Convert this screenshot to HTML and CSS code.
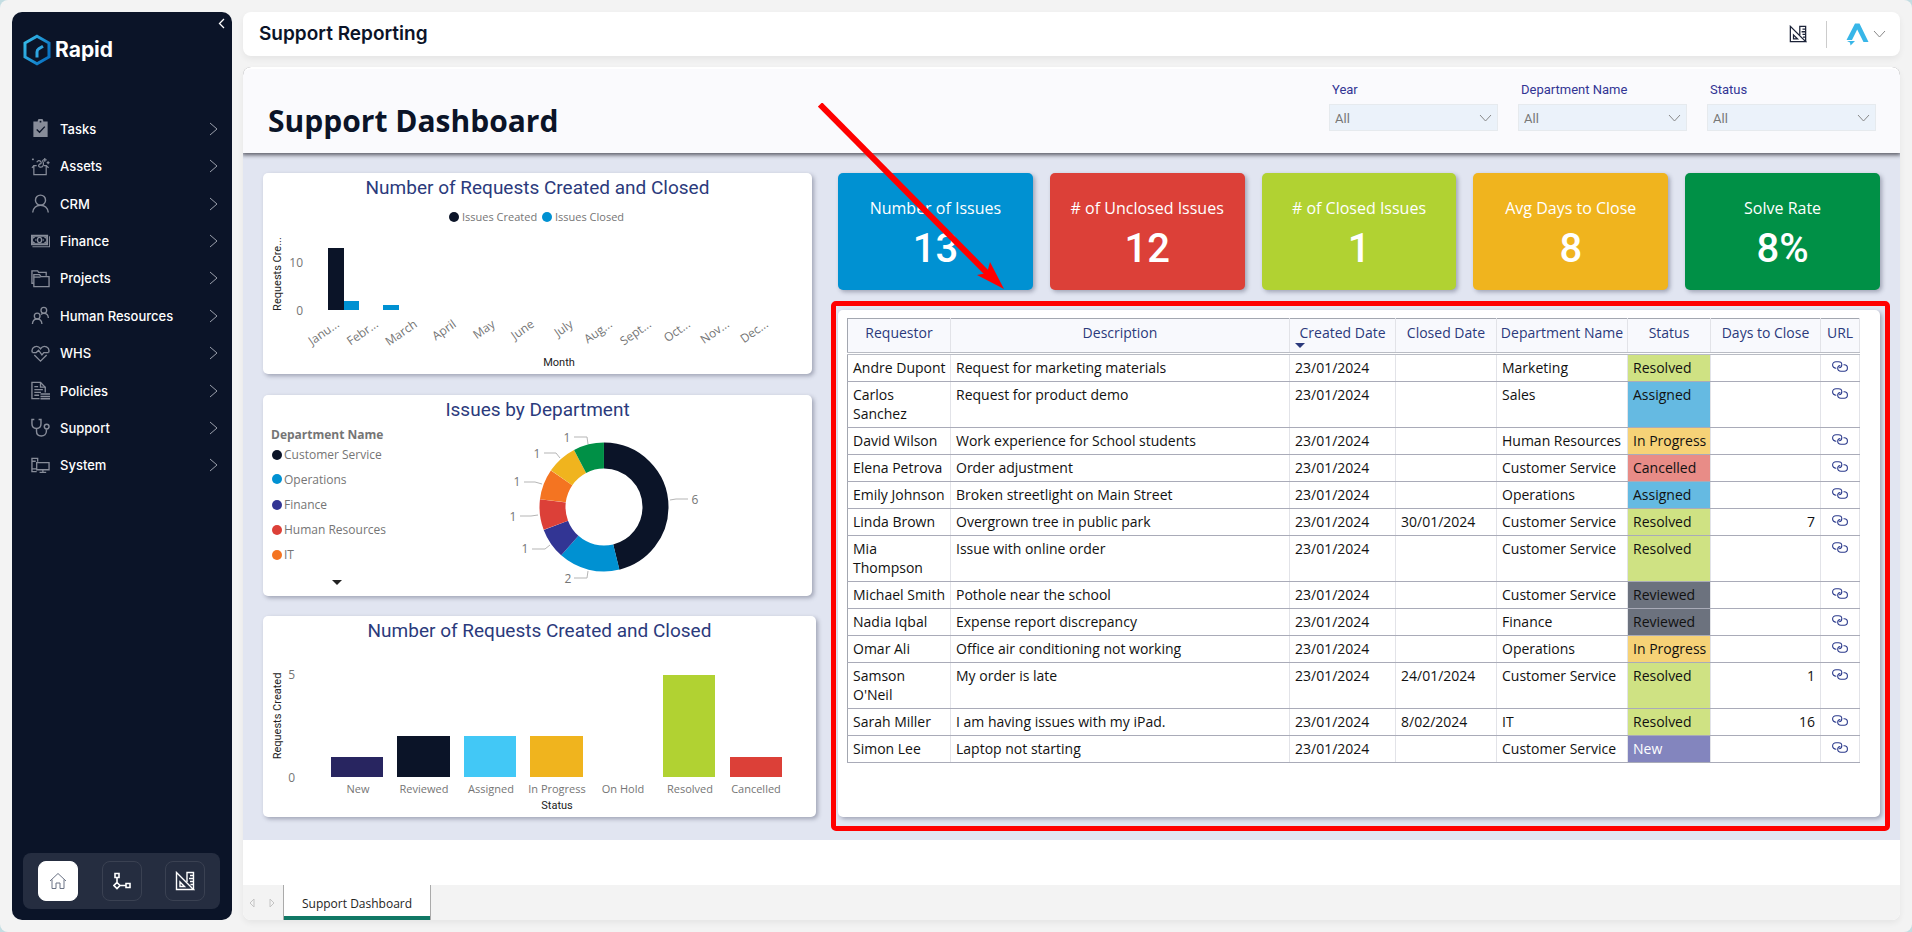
FILE: index.html
```html
<!DOCTYPE html>
<html lang="en">
<head>
<meta charset="utf-8">
<title>Support Reporting</title>
<meta name="viewport" content="width=device-width, initial-scale=1">
<link rel="stylesheet" href="styles.css">
</head>
<body>
<svg class="sprite" aria-hidden="true">
  <symbol id="next" viewBox="0 0 9 14"><path d="M1 1l7 6-7 6" fill="none" stroke="currentColor"/></symbol>
  <symbol id="down" viewBox="0 0 13 8"><path d="M1 1l5.500 6L12 1" fill="none" stroke="currentColor"/></symbol>
  <symbol id="link" viewBox="0 0 16 11"><g fill="none" stroke="currentColor" stroke-width="1.100"><path d="M4.300 7.200H4A3.400 3.200 0 0 1 4 .8H6.500A3.300 2.900 0 0 1 9.800 3.700C9.800 5.200 8.800 6.500 7.200 6.600"/><path d="M11.500 3.800H12.200A3.200 3.200 0 0 1 12.200 10.200H9A3.300 2.900 0 0 1 5.700 7.300C5.700 5.800 6.700 4.600 8.300 4.500"/></g></symbol>
  <symbol id="design" viewBox="0 0 20 20"><g fill="none" stroke="currentColor" stroke-width="1.400"><path d="M1.500 1.500v17h17z"/><path d="M5 11v4.500h4.500z"/><path d="M12 11V1.500h6.500v17"/><path d="M15 4.500h3M14 7.500h4M15 10.500h3M15.500 13.500h3"/></g></symbol>
</svg>
<div class="app">
  <aside class="sidebar">
    <button class="collapse" aria-label="Collapse menu"><svg width="7" height="11" viewBox="0 0 7 11"><path d="M6 1L1.500 5.500 6 10" fill="none" stroke="currentColor" stroke-width="1.300"/></svg></button>
    <a class="brand" href="#">
      <svg width="28" height="32" viewBox="0 0 28 32" aria-hidden="true">
        <defs><linearGradient id="hex" x1="0" y1="0" x2="1" y2="0.600"><stop offset="0" stop-color="#39bfea"/><stop offset="1" stop-color="#0b74c4"/></linearGradient></defs>
        <path d="M14 2.200l12 6.800v14l-12 6.800L2 23V9z" fill="none" stroke="url(#hex)" stroke-width="3"/>
        <path d="M14 23.500v-5.500q0-2 1.800-3.200L20 12.200" fill="none" stroke="#2fa5e0" stroke-width="3"/>
      </svg>
      <span>Rapid</span>
    </a>
    <nav class="menu">
      <a href="#"><svg class="icon" viewBox="0 0 20 20"><path fill="currentColor" d="M2.500 2.500H7a3 3 0 0 1 6 0h4.500V19h-15z"/><circle cx="10" cy="2.800" r="1" fill="#0b1428"/><path d="M6 11l3 3 5.500-6" fill="none" stroke="#0b1428" stroke-width="1.400"/></svg><span>Tasks</span><svg class="chev"><use href="#next"/></svg></a>
      <a href="#"><svg class="icon" viewBox="0 0 20 20"><g fill="none" stroke="currentColor" stroke-width="1.300"><path d="M6 9H3v9.500h13V9h-2.500M1 11.500L3 9M18.500 11.500L16 9"/><path d="M6 5.500q2-3 4-1t-1 3q-2 2 0 3 3 1 4-2 .5-2-1-5"/><path d="M14.500 1v4M12.500 3h4M18 4.500v3M16.500 6h3M2 1.500v2M1 2.500h2"/></g></svg><span>Assets</span><svg class="chev"><use href="#next"/></svg></a>
      <a href="#"><svg class="icon" viewBox="0 0 20 20"><g fill="none" stroke="currentColor" stroke-width="1.500"><circle cx="10" cy="6.500" r="5.300"/><path d="M1.800 19.500c.5-5 4-7.700 8.200-7.700s7.700 2.700 8.200 7.700"/></g></svg><span>CRM</span><svg class="chev"><use href="#next"/></svg></a>
      <a href="#"><svg class="icon" viewBox="0 0 20 20"><path fill="currentColor" fill-rule="evenodd" d="M0 4h18v11H0zM2 6v7h14V6z"/><path fill="currentColor" d="M2 6h3L2 8.500zM16 6h-3l3 2.500zM2 13h3l-3-2.500zM16 13h-3l3-2.500zM1.500 16h17.500V5.500h1V17H1.500z"/><g fill="none" stroke="currentColor" stroke-width="1.400"><ellipse cx="9" cy="9.500" rx="2.200" ry="2.800"/><path d="M4.500 9.500h1.200M12.300 9.500h1.200"/></g></svg><span>Finance</span><svg class="chev"><use href="#next"/></svg></a>
      <a href="#"><svg class="icon" viewBox="0 0 20 20"><g fill="none" stroke="currentColor" stroke-width="1.400"><path d="M3 15H1V2h6l1 1.500h8V7"/><path d="M3 18.500V6h6l1.500 2h8.500v10.500z"/><path d="M3 8.500h7"/></g></svg><span>Projects</span><svg class="chev"><use href="#next"/></svg></a>
      <a href="#"><svg class="icon" viewBox="0 0 20 20"><g fill="none" stroke="currentColor" stroke-width="1.400"><circle cx="6.500" cy="10.500" r="3"/><path d="M1.500 19c.2-3.500 2.200-5.300 5-5.300s4.800 1.800 5 5.300"/><circle cx="13.500" cy="4.500" r="3"/><path d="M10.500 9q1.200-1.300 3-1.300c2.800 0 4.600 1.800 4.800 5"/></g></svg><span>Human Resources</span><svg class="chev"><use href="#next"/></svg></a>
      <a href="#"><svg class="icon" viewBox="0 0 20 20"><g fill="none" stroke="currentColor" stroke-width="1.400"><path d="M1.500 9C-.5 3.500 6.500 0 10 5c3.500-5 10.500-1.500 8.500 4"/><path d="M1.500 9h4L8 6.500l3.500 5L13.500 9h5M3.500 11.500l6.500 6.500 6.500-6.500"/></g></svg><span>WHS</span><svg class="chev"><use href="#next"/></svg></a>
      <a href="#"><svg class="icon" viewBox="0 0 20 20"><g fill="none" stroke="currentColor" stroke-width="1.400"><path d="M9 18.500H1v-17h9l5 5V12"/><path d="M10 1.500v5h5M3.500 6h4M3.500 9h9M3.500 12h7M3.500 15h5"/><path d="M10 13.700h10M10 16.200h10M10 18.700h10" stroke-width="1.600"/></g></svg><span>Policies</span><svg class="chev"><use href="#next"/></svg></a>
      <a href="#"><svg class="icon" viewBox="0 0 20 20"><g fill="none" stroke="currentColor" stroke-width="1.500"><path d="M3.500 1.500H1V6c0 3 2 5 4.800 5s4.700-2 4.700-5V1.500H8"/><path d="M5.800 11v3c0 3 2 5 5 5s5.400-2 5.400-5v-2"/><circle cx="16.500" cy="9" r="2.500"/></g></svg><span>Support</span><svg class="chev"><use href="#next"/></svg></a>
      <a href="#"><svg class="icon" viewBox="0 0 20 20"><g fill="none" stroke="currentColor" stroke-width="1.400"><path d="M6 16.500H1v-14h6V6M1 5.500h4M1 13.500h5"/><path d="M6 7h13v7.500H6zM12.500 14.500v2.500M9 17.200h7"/></g></svg><span>System</span><svg class="chev"><use href="#next"/></svg></a>
    </nav>
    <div class="dock">
      <button class="dock-btn active" aria-label="Home"><svg width="18" height="18" viewBox="0 0 18 18"><path d="M1 9l8-7.500L17 9M3 7.500v9h4v-5.500h4v5.500h4v-9" fill="none" stroke="#6b7385"/></svg></button>
      <button class="dock-btn" aria-label="Workflow"><svg width="18" height="18" viewBox="0 0 18 18"><g fill="none" stroke="#fff" stroke-width="1.600"><path d="M2 1.500h4v4H2zM13 11.500h4v4h-4zM4 5.500v5M7 13.500h6M4 10.500l3 3-3 3-3-3z"/></g></svg></button>
      <button class="dock-btn" aria-label="Design"><svg width="20" height="20"><use href="#design"/></svg></button>
    </div>
  </aside>

  <main class="main">
    <header class="topbar">
      <h1>Support Reporting</h1>
      <div class="tools">
        <button class="tool" aria-label="Design"><svg width="18" height="18"><use href="#design"/></svg></button>
        <span class="rule"></span>
        <button class="account" aria-label="Account">
          <svg width="23" height="23" viewBox="0 0 23 23"><path d="M9 0.500h4.500L22.500 19h-5L11.200 6.500 6 17H0.500z" fill="#38b6e8"/><path d="M1 18h8l-4.500 4.500L4 19.500z" fill="#38b6e8"/></svg>
          <svg class="down" width="13" height="8"><use href="#down"/></svg>
        </button>
      </div>
    </header>

    <section class="report">
      <div class="report-head">
        <h2>Support Dashboard</h2>
        <div class="filters">
          <div class="filter"><label for="year">Year</label><div class="pick"><select id="year"><option>All</option></select><svg class="down" width="13" height="8"><use href="#down"/></svg></div></div>
          <div class="filter"><label for="dept">Department Name</label><div class="pick"><select id="dept"><option>All</option></select><svg class="down" width="13" height="8"><use href="#down"/></svg></div></div>
          <div class="filter"><label for="status">Status</label><div class="pick"><select id="status"><option>All</option></select><svg class="down" width="13" height="8"><use href="#down"/></svg></div></div>
        </div>
      </div>

      <div class="report-body">
        <div class="charts">
          <article class="card chart">
            <h3>Number of Requests Created and Closed</h3>
            <svg class="plot" viewBox="0 0 549 171">
              <circle cx="191" cy="14" r="5" fill="#0b1428"/><text x="199" y="18" class="name">Issues Created</text>
              <circle cx="284" cy="14" r="5" fill="#0091d2"/><text x="292" y="18" class="name">Issues Closed</text>
              <text x="40" y="64" class="tick end">10</text><text x="40" y="112" class="tick end">0</text>
              <text class="axis mid" transform="translate(18 71) rotate(-90)">Requests Cre...</text>
              <rect x="65" y="45" width="16" height="62" fill="#0b1428"/>
              <rect x="81" y="98" width="15" height="9" fill="#0091d2"/>
              <rect x="120" y="102" width="16" height="5" fill="#0091d2"/>
              <g class="tick end">
                <text transform="translate(77 123) rotate(-35)">Janu...</text>
                <text transform="translate(116 123) rotate(-35)">Febr...</text>
                <text transform="translate(155 123) rotate(-35)">March</text>
                <text transform="translate(194 123) rotate(-35)">April</text>
                <text transform="translate(233 123) rotate(-35)">May</text>
                <text transform="translate(272 123) rotate(-35)">June</text>
                <text transform="translate(311 123) rotate(-35)">July</text>
                <text transform="translate(350 123) rotate(-35)">Aug...</text>
                <text transform="translate(389 123) rotate(-35)">Sept...</text>
                <text transform="translate(428 123) rotate(-35)">Oct...</text>
                <text transform="translate(467 123) rotate(-35)">Nov...</text>
                <text transform="translate(506 123) rotate(-35)">Dec...</text>
              </g>
              <text x="296" y="163" class="axis mid">Month</text>
            </svg>
          </article>

          <article class="card chart">
            <h3>Issues by Department</h3>
            <svg class="plot" viewBox="0 0 549 171">
              <text x="8" y="14" class="legend-title">Department Name</text>
              <g class="legend">
                <circle cx="14" cy="30" r="5" fill="#0b1428"/><text x="21" y="34">Customer Service</text>
                <circle cx="14" cy="54" r="5" fill="#0091d2"/><text x="21" y="59">Operations</text>
                <circle cx="14" cy="80" r="5" fill="#323594"/><text x="21" y="84">Finance</text>
                <circle cx="14" cy="105" r="5" fill="#dc4038"/><text x="21" y="109">Human Resources</text>
                <circle cx="14" cy="130" r="5" fill="#f47421"/><text x="21" y="134">IT</text>
              </g>
              <path d="M69 155h10l-5 5z" fill="#222"/>
              <g fill="none" stroke-width="26">
                <circle cx="341" cy="82" r="51.500" pathLength="13" stroke="#0b1428" stroke-dasharray="6 13" transform="rotate(-90 341 82)"/>
                <circle cx="341" cy="82" r="51.500" pathLength="13" stroke="#0091d2" stroke-dasharray="2 13" transform="rotate(76.150 341 82)"/>
                <circle cx="341" cy="82" r="51.500" pathLength="13" stroke="#323594" stroke-dasharray="1 13" transform="rotate(131.540 341 82)"/>
                <circle cx="341" cy="82" r="51.500" pathLength="13" stroke="#dc4038" stroke-dasharray="1 13" transform="rotate(159.230 341 82)"/>
                <circle cx="341" cy="82" r="51.500" pathLength="13" stroke="#f47421" stroke-dasharray="1 13" transform="rotate(186.920 341 82)"/>
                <circle cx="341" cy="82" r="51.500" pathLength="13" stroke="#f0b41e" stroke-dasharray="1 13" transform="rotate(214.620 341 82)"/>
                <circle cx="341" cy="82" r="51.500" pathLength="13" stroke="#009046" stroke-dasharray="1 13" transform="rotate(242.310 341 82)"/>
              </g>
              <g fill="none" stroke="#b5b5b5"><path d="M407 75l6-1h12M311 12h13l1 7M281 28h12l4 5M261 57h11l7 2M257 91h11l7-1M269 124h13l5-4M311 153h13l1-7"/></g>
              <g class="tick mid">
                <text x="432" y="79">6</text><text x="304" y="17">1</text><text x="274" y="33">1</text><text x="254" y="61">1</text><text x="250" y="96">1</text><text x="262" y="128">1</text><text x="305" y="158">2</text>
              </g>
            </svg>
          </article>

          <article class="card chart wide">
            <h3>Number of Requests Created and Closed</h3>
            <svg class="plot" viewBox="0 0 553 171">
              <text x="32" y="33" class="tick end">5</text><text x="32" y="136" class="tick end">0</text>
              <text class="axis mid" transform="translate(18 70) rotate(-90)">Requests Created</text>
              <rect x="68" y="111" width="52" height="20" fill="#282560"/>
              <rect x="134" y="90" width="53" height="41" fill="#0b1428"/>
              <rect x="201" y="90" width="52" height="41" fill="#42c8f6"/>
              <rect x="267" y="90" width="53" height="41" fill="#f0b41e"/>
              <rect x="400" y="29" width="52" height="102" fill="#b1d232"/>
              <rect x="467" y="111" width="52" height="20" fill="#dc4038"/>
              <g class="name mid">
                <text x="95" y="147">New</text><text x="161" y="147">Reviewed</text><text x="228" y="147">Assigned</text><text x="294" y="147">In Progress</text><text x="360" y="147">On Hold</text><text x="427" y="147">Resolved</text><text x="493" y="147">Cancelled</text>
              </g>
              <text x="294" y="163" class="axis mid">Status</text>
            </svg>
          </article>
        </div>

        <div class="details">
          <div class="kpis">
            <div class="kpi blue"><span class="kpi-label">Number of Issues</span><strong>13</strong>
              <svg class="pointer" width="188" height="188" viewBox="0 0 188 188" aria-hidden="true"><path d="M2 1.500L170 171" stroke="#f00" stroke-width="6"/><path d="M186 186l-27-14 10-2 3-11z" fill="#f00"/></svg>
            </div>
            <div class="kpi red"><span class="kpi-label"># of Unclosed Issues</span><strong>12</strong></div>
            <div class="kpi lime"><span class="kpi-label"># of Closed Issues</span><strong>1</strong></div>
            <div class="kpi amber"><span class="kpi-label">Avg Days to Close</span><strong>8</strong></div>
            <div class="kpi green"><span class="kpi-label">Solve Rate</span><strong>8%</strong></div>
          </div>

          <div class="card table-card">
            <table>
              <colgroup><col class="c-name"><col><col class="c-created"><col class="c-closed"><col class="c-dept"><col class="c-status"><col class="c-days"><col class="c-url"></colgroup>
              <thead><tr><th>Requestor</th><th>Description</th><th class="sorted">Created Date</th><th>Closed Date</th><th>Department Name</th><th>Status</th><th>Days to Close</th><th>URL</th></tr></thead>
              <tbody>
                <tr><td>Andre Dupont</td><td>Request for marketing materials</td><td>23/01/2024</td><td></td><td>Marketing</td><td class="resolved">Resolved</td><td></td><td><a href="#" aria-label="Open"><svg><use href="#link"/></svg></a></td></tr>
                <tr><td>Carlos<br>Sanchez</td><td>Request for product demo</td><td>23/01/2024</td><td></td><td>Sales</td><td class="assigned">Assigned</td><td></td><td><a href="#" aria-label="Open"><svg><use href="#link"/></svg></a></td></tr>
                <tr><td>David Wilson</td><td>Work experience for School students</td><td>23/01/2024</td><td></td><td>Human Resources</td><td class="progress">In Progress</td><td></td><td><a href="#" aria-label="Open"><svg><use href="#link"/></svg></a></td></tr>
                <tr><td>Elena Petrova</td><td>Order adjustment</td><td>23/01/2024</td><td></td><td>Customer Service</td><td class="cancelled">Cancelled</td><td></td><td><a href="#" aria-label="Open"><svg><use href="#link"/></svg></a></td></tr>
                <tr><td>Emily Johnson</td><td>Broken streetlight on Main Street</td><td>23/01/2024</td><td></td><td>Operations</td><td class="assigned">Assigned</td><td></td><td><a href="#" aria-label="Open"><svg><use href="#link"/></svg></a></td></tr>
                <tr><td>Linda Brown</td><td>Overgrown tree in public park</td><td>23/01/2024</td><td>30/01/2024</td><td>Customer Service</td><td class="resolved">Resolved</td><td class="num">7</td><td><a href="#" aria-label="Open"><svg><use href="#link"/></svg></a></td></tr>
                <tr><td>Mia<br>Thompson</td><td>Issue with online order</td><td>23/01/2024</td><td></td><td>Customer Service</td><td class="resolved">Resolved</td><td></td><td><a href="#" aria-label="Open"><svg><use href="#link"/></svg></a></td></tr>
                <tr><td>Michael Smith</td><td>Pothole near the school</td><td>23/01/2024</td><td></td><td>Customer Service</td><td class="reviewed">Reviewed</td><td></td><td><a href="#" aria-label="Open"><svg><use href="#link"/></svg></a></td></tr>
                <tr><td>Nadia Iqbal</td><td>Expense report discrepancy</td><td>23/01/2024</td><td></td><td>Finance</td><td class="reviewed">Reviewed</td><td></td><td><a href="#" aria-label="Open"><svg><use href="#link"/></svg></a></td></tr>
                <tr><td>Omar Ali</td><td>Office air conditioning not working</td><td>23/01/2024</td><td></td><td>Operations</td><td class="progress">In Progress</td><td></td><td><a href="#" aria-label="Open"><svg><use href="#link"/></svg></a></td></tr>
                <tr><td>Samson<br>O'Neil</td><td>My order is late</td><td>23/01/2024</td><td>24/01/2024</td><td>Customer Service</td><td class="resolved">Resolved</td><td class="num">1</td><td><a href="#" aria-label="Open"><svg><use href="#link"/></svg></a></td></tr>
                <tr><td>Sarah Miller</td><td>I am having issues with my iPad.</td><td>23/01/2024</td><td>8/02/2024</td><td>IT</td><td class="resolved">Resolved</td><td class="num">16</td><td><a href="#" aria-label="Open"><svg><use href="#link"/></svg></a></td></tr>
                <tr><td>Simon Lee</td><td>Laptop not starting</td><td>23/01/2024</td><td></td><td>Customer Service</td><td class="new">New</td><td></td><td><a href="#" aria-label="Open"><svg><use href="#link"/></svg></a></td></tr>
              </tbody>
            </table>
            <div class="highlight"></div>
          </div>
        </div>
      </div>

      <div class="report-foot">
        <div class="pager">
          <button aria-label="Previous page"><svg width="6" height="10" viewBox="0 0 6 10"><path d="M5 1v8L1 5z" fill="none" stroke="#c4c4c4"/></svg></button>
          <button aria-label="Next page"><svg width="6" height="10" viewBox="0 0 6 10"><path d="M1 1v8l4-4z" fill="none" stroke="#c4c4c4"/></svg></button>
        </div>
        <button class="page-tab">Support Dashboard</button>
      </div>
    </section>
  </main>
</div>
</body>
</html>
```
FILE: styles.css
```css
* { box-sizing: border-box; }
body { margin: 0; background: #c3dde2; font-family: "Open Sans", "Noto Sans", sans-serif; color: #111; }
button { margin: 0; padding: 0; border: 0; background: none; font: inherit; color: inherit; }
a { color: inherit; text-decoration: none; }
svg { display: block; }
.sprite { position: absolute; width: 0; height: 0; }

.app { display: flex; gap: 11px; min-height: 100vh; padding: 12px; background: #f3f3f3; border-radius: 8px; }

.sidebar { position: relative; display: flex; flex-direction: column; flex: 0 0 220px; padding: 22px 12px 11px 11px; background: #0b1428; border-radius: 10px; color: #fff; font-family: Inter, sans-serif; }
.collapse { position: absolute; top: 6px; right: 7px; }
.brand { display: flex; align-items: center; gap: 4px; font-size: 21px; font-weight: 700; line-height: 32px; }
.menu { display: flex; flex-direction: column; height: 374px; margin-top: 44px; }
.menu a { display: flex; flex: 1; align-items: center; gap: 10px; padding: 0 2px 0 8px; font-size: 13px; font-weight: 500; }
.menu span { flex: 1; }
.icon { width: 19px; height: 19px; color: #878c99; }
.chev { width: 9px; height: 14px; color: #9a9fab; }
.dock { display: flex; justify-content: space-between; margin-top: auto; padding: 8px 15px; background: #252d40; border-radius: 8px; }
.dock-btn { display: grid; place-items: center; width: 40px; height: 40px; border: 1px solid #3a4152; border-radius: 8px; color: #fff; }
.dock-btn.active { background: #fff; border-color: #fff; }

.main { display: flex; flex: 1; flex-direction: column; gap: 11px; min-width: 0; }
.topbar { display: flex; align-items: center; justify-content: space-between; height: 44px; padding: 0 14px 0 16px; background: #fff; border-radius: 8px; box-shadow: 0 3px 6px rgba(0, 0, 0, .06); }
.topbar h1 { margin: 0; font: 600 19px/24px Inter, sans-serif; color: #0b1428; }
.tools { display: flex; align-items: center; gap: 19px; }
.tool { color: #1c2338; }
.rule { width: 1px; height: 27px; background: #ccc; }
.account { display: flex; align-items: center; gap: 4px; }
.down { color: #888; }

.report { display: flex; flex: 1; flex-direction: column; overflow: hidden; background: #fff; border-radius: 8px; box-shadow: 0 3px 6px rgba(0, 0, 0, .06); }
.report-head { position: relative; display: flex; justify-content: space-between; min-height: 86px; padding: 12px 24px 0 25px; background: #fafafd; border-top: 2px solid #fff; border-radius: 8px 8px 0 0; box-shadow: 0 1px 4px 1px rgba(50, 50, 60, .8); }
.report-head h2 { margin: 18px 0 0; font-size: 30px; font-weight: 700; line-height: 44px; color: #0b1428; }
.filters { display: flex; gap: 20px; }
.filter { width: 169px; }
.filter label { display: block; padding-left: 3px; font: 13px/18px Roboto, sans-serif; color: #323594; }
.pick { position: relative; margin-top: 5px; }
.pick select { width: 100%; height: 27px; padding: 2px 5px 0; appearance: none; background: #ebf2fa; border: 1px solid #e6eaee; border-radius: 0; font: 13px Roboto, sans-serif; color: #777; }
.pick .down { position: absolute; top: 10px; right: 6px; pointer-events: none; }

.report-body { display: grid; grid-template-columns: minmax(0, 549fr) minmax(0, 1042fr); gap: 26px; padding: 20px 20px 23px; background: #e1e5f1; }
.card { background: #fff; border-radius: 5px; box-shadow: 2px 2px 4px rgba(60, 65, 90, .4); }
.charts { display: flex; flex-direction: column; justify-content: space-between; gap: 20px; }
.chart.wide { margin-right: -4px; }
.chart h3 { margin: 0; font: 19px/30px Roboto, sans-serif; text-align: center; color: #2b3a7c; }
.plot { width: 100%; height: 171px; }
.tick, .legend { font-size: 12px; fill: #757575; }
.name { font-size: 11px; fill: #757575; }
.legend-title { font-size: 12px; font-weight: 700; fill: #757575; }
.axis { font: 11px Roboto, sans-serif; fill: #222; }
.mid { text-anchor: middle; }
.end { text-anchor: end; }

.details { display: flex; flex-direction: column; gap: 20px; }
.kpis { display: grid; grid-template-columns: repeat(5, minmax(0, 1fr)); gap: 17px; }
.kpi { position: relative; display: flex; flex-direction: column; align-items: center; height: 117px; padding-top: 24px; border-radius: 5px; box-shadow: 2px 2px 4px rgba(60, 65, 90, .4); color: #fff; }
.kpi-label { font-size: 16px; line-height: 22px; }
.kpi strong { margin-top: 8px; font: 500 40px/44px Roboto, sans-serif; }
.blue { z-index: 2; background: #0091d2; }
.red { background: #dc4038; }
.lime { background: #b1d232; }
.amber { background: #f0b41e; }
.green { background: #009046; }
.pointer { position: absolute; top: -70px; left: -20px; }

.table-card { position: relative; flex: 1; min-height: 507px; padding: 8px 20px 8px 9px; }
.highlight { position: absolute; inset: -9px -10px -14px -7px; border: 5px solid #f00; border-radius: 5px; pointer-events: none; }
table { width: 100%; table-layout: fixed; border-collapse: collapse; border: 1px solid #a3a7b0; font-size: 14px; line-height: 19px; }
.c-name { width: 103px; }
.c-created { width: 106px; }
.c-closed { width: 101px; }
.c-dept { width: 131px; }
.c-status { width: 83px; }
.c-days { width: 110px; }
.c-url { width: 39px; }
th { position: relative; height: 35px; padding: 4px 0 10px; background: #f8f9fd; border-right: 1px solid #e2e3e8; border-bottom: 3px double #b9bcc4; font-weight: 400; color: #2b3a7c; white-space: nowrap; }
td { padding: 3px 0 4px 5px; border-right: 1px solid #e2e3e8; border-bottom: 1px solid #a9abb8; vertical-align: top; }
.sorted::after { position: absolute; bottom: 4px; left: 5px; border: 5px solid transparent; border-top-color: #2b3a7c; border-bottom: 0; content: ""; }
.num { padding-right: 5px; text-align: right; }
td a { color: #2b3a8c; }
td a svg { width: 16px; height: 11px; margin: 3px 0 0 6px; }
.resolved { background: #cfe283; }
.assigned { background: #65bae2; }
.progress { background: #f6d277; }
.cancelled { background: #e88c87; }
.reviewed { background: #6c727e; }
.new { background: #8385be; color: #fff; }

.report-foot { display: flex; height: 35px; margin-top: auto; background: #f3f3f3; }
.pager { display: flex; align-items: center; justify-content: space-between; width: 40px; padding: 0 8px 0 6px; }
.page-tab { padding: 2px 18px 0; background: #fff; border: solid #aaa; border-width: 0 1px; box-shadow: inset 0 -4px #117865; font-size: 12px; font-weight: 500; color: #252423; }
```
